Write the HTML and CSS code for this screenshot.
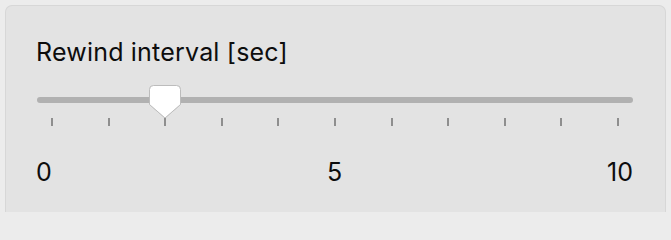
FILE: index.html
```html
<!DOCTYPE html>
<html>
<head>
<meta charset="utf-8">
<link rel="stylesheet" href="styles.css">
</head>
<body>
<div class="panel">
  <div class="label">Rewind interval [sec]</div>
  <div class="slider" style="--v: 0.2">
    <div class="track"></div>
    <svg class="thumb" width="34" height="36" viewBox="-1 -1 34 36">
      <path d="M4.5 0.5 H27.5 Q31.5 0.5 31.5 4.5 V19.5 L16 33 L0.5 19.5 V4.5 Q0.5 0.5 4.5 0.5 Z" fill="#ffffff" stroke="#bcbcbc" stroke-width="1"/>
    </svg>
    <div class="ticks">
      <span></span><span></span><span></span><span></span><span></span><span></span>
      <span></span><span></span><span></span><span></span><span></span>
    </div>
  </div>
  <div class="scale">
    <span class="min">0</span>
    <span class="mid">5</span>
    <span class="max">10</span>
  </div>
</div>
</body>
</html>
```

FILE: styles.css
```css
html, body {
  margin: 0;
  padding: 0;
  background: #ececec;
}
body {
  height: 212px;
  box-sizing: border-box;
  padding: 5px 5px 0 5px;
  font-family: Inter, "Liberation Sans", sans-serif;
  color: #0d0d0d;
}
.panel {
  height: 207px;
  box-sizing: border-box;
  background: #e3e3e3;
  border: 1px solid #d7d7d7;
  border-bottom: none;
  border-radius: 7px 7px 0 0;
  padding: 31px 32px 0 30px;
}
.label {
  font-size: 25px;
  line-height: 30px;
  letter-spacing: 0.2px;
}
.slider {
  position: relative;
  margin-left: 1px;
  padding-top: 30px;
}
.track {
  height: 6px;
  border-radius: 3px;
  background: #b1b1b1;
}
.thumb {
  position: absolute;
  top: 17px;
  left: calc(15px + (100% - 30px) * var(--v) - 17px);
  overflow: visible;
  filter: drop-shadow(0 0.5px 0.5px rgba(0,0,0,0.12));
}
.ticks {
  display: flex;
  justify-content: space-between;
  margin-top: 15px;
  padding: 0 14px;
}
.ticks span {
  width: 2px;
  height: 8px;
  background: #8e8e8e;
}
.scale {
  display: grid;
  grid-template-columns: 1fr auto 1fr;
  margin-top: 31px;
  font-size: 25px;
  line-height: 30px;
}
.scale .min { justify-self: start; }
.scale .mid { justify-self: center; }
.scale .max { justify-self: end; }
```
